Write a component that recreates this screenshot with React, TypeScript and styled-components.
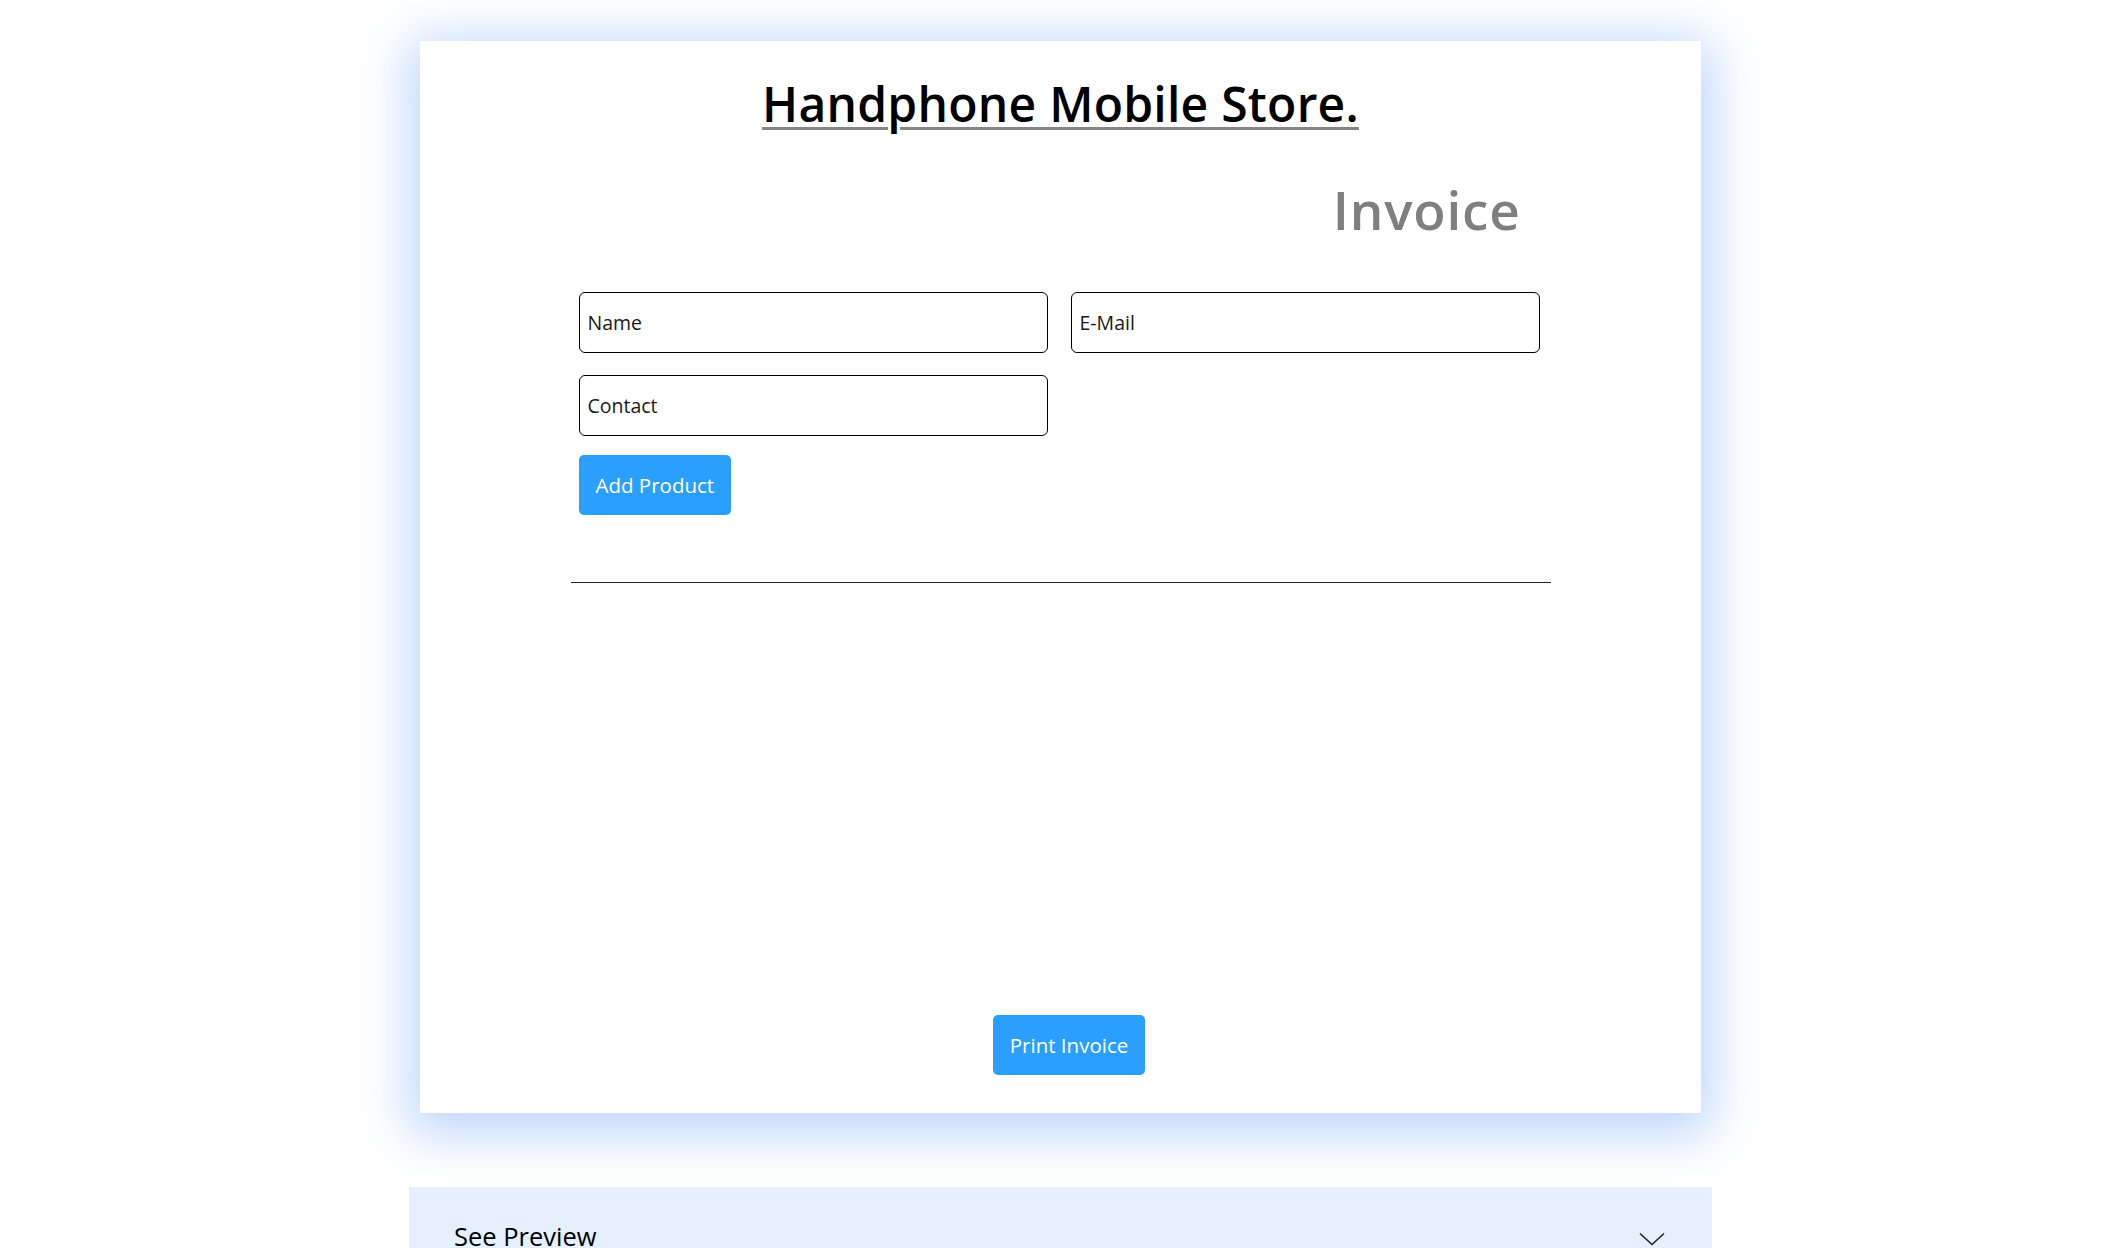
import React from "react";
import styled, { createGlobalStyle } from "styled-components";

const GlobalStyle = createGlobalStyle`
  html, body {
    margin: 0;
    padding: 0;
    background: #ffffff;
    font-family: "Open Sans", "Noto Sans", sans-serif;
  }
  * { box-sizing: border-box; }
`;

const Page = styled.div`
  display: flex;
  flex-direction: column;
  align-items: center;
  padding: 41px 4px 0 0;
  height: 1248px;
  overflow: hidden;
`;

const Card = styled.div`
  width: 1281px;
  background: #ffffff;
  display: flex;
  flex-direction: column;
  align-items: center;
  padding: 33px 0 38px;
  box-shadow: 0 10px 48px 10px rgba(60, 130, 245, 0.34);
`;

const Title = styled.h1`
  margin: 0;
  font-size: 48px;
  line-height: 60px;
  font-weight: 600;
  color: #000;
  text-decoration: underline;
  text-decoration-color: #868686;
  text-decoration-thickness: 3px;
  text-underline-offset: 5px;
  letter-spacing: 0.25px;
`;

const Form = styled.div`
  width: 980px;
  display: flex;
  flex-direction: column;
`;

const InvoiceHeading = styled.h2`
  margin: 44px 0 0;
  align-self: flex-end;
  padding-right: 30px;
  font-size: 53px;
  line-height: 64px;
  font-weight: 600;
  color: #7f7f7f;
  letter-spacing: 0.8px;
`;

const Fields = styled.div`
  margin: 50px 9px 0 8px;
  display: grid;
  grid-template-columns: 469px 469px;
  grid-auto-rows: 61px;
  column-gap: 23px;
  row-gap: 22px;
`;

const Input = styled.input`
  width: 100%;
  height: 100%;
  border: 1px solid #000;
  border-radius: 6px;
  padding: 0 8px;
  font-family: "Open Sans", sans-serif;
  font-size: 19.5px;
  color: #000;
  outline: none;
  &::placeholder {
    color: #1a1a1a;
    opacity: 1;
  }
`;

const BlueButton = styled.button<{ $shift?: number }>`
  height: 60px;
  padding: 0 17px;
  border: none;
  border-radius: 5px;
  background: #2b9ffe;
  color: #ffffff;
  font-family: "Open Sans", sans-serif;
  font-size: 20.5px;
  font-weight: 400;
  cursor: pointer;
  margin-left: ${(p) => p.$shift ?? 0}px;
`;

const AddRow = styled.div`
  margin: 19px 0 0 8px;
  display: flex;
`;

const Divider = styled.hr`
  margin: 67px 0 0;
  border: none;
  border-top: 1px solid #222;
  height: 0;
`;

const Products = styled.div`
  height: 432px;
`;

const PrintRow = styled.div`
  display: flex;
  justify-content: center;
`;

const Preview = styled.div`
  margin-top: 74px;
  width: 1303px;
  background: #e6f0fd;
  padding: 31px 47px 30px 45px;
  display: flex;
  align-items: center;
  justify-content: space-between;
`;

const PreviewLabel = styled.span`
  font-size: 25.5px;
  line-height: 36px;
  font-weight: 500;
  color: #000;
`;

const ChevronBox = styled.span`
  display: flex;
  margin-top: 6px;
`;

const Chevron = () => (
  <ChevronBox>
    <svg width="26" height="14" viewBox="0 0 26 14" fill="none">
      <path d="M1 1.5 L13 12.5 L25 1.5" stroke="#222" strokeWidth="1.6" />
    </svg>
  </ChevronBox>
);

export default function App() {
  return (
    <>
      <GlobalStyle />
      <Page>
        <Card>
          <Title>Handphone Mobile Store.</Title>
          <Form>
            <InvoiceHeading>Invoice</InvoiceHeading>
            <Fields>
              <Input placeholder="Name" />
              <Input placeholder="E-Mail" />
              <Input placeholder="Contact" />
            </Fields>
            <AddRow>
              <BlueButton>Add Product</BlueButton>
            </AddRow>
            <Divider />
            <Products />
          </Form>
          <PrintRow>
            <BlueButton $shift={17}>Print Invoice</BlueButton>
          </PrintRow>
        </Card>
        <Preview>
          <PreviewLabel>See Preview</PreviewLabel>
          <Chevron />
        </Preview>
      </Page>
    </>
  );
}
